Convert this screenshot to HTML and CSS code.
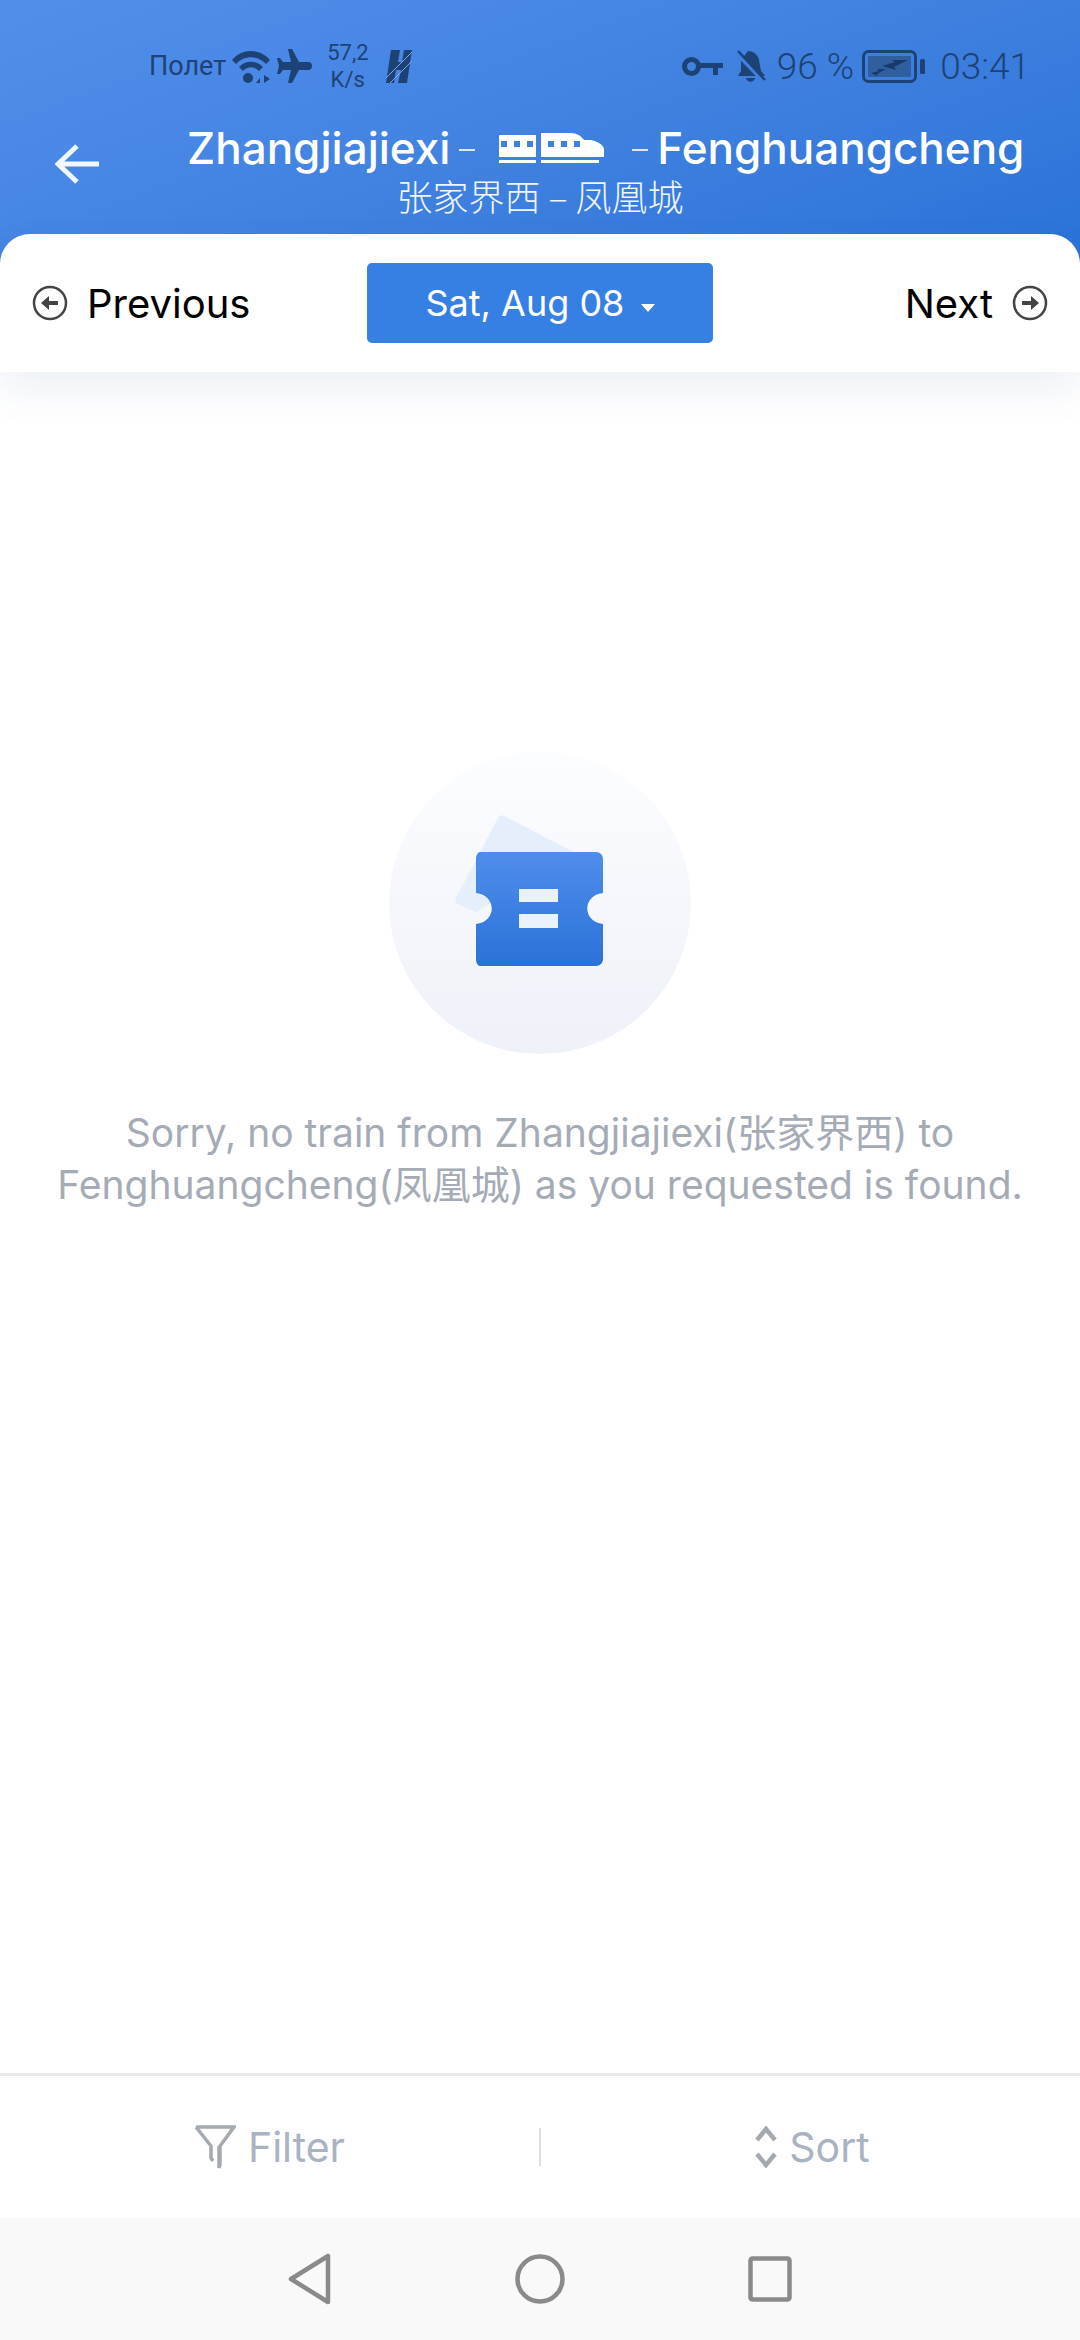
FILE: index.html
```html
<!DOCTYPE html>
<html lang="en">
<head>
  <meta charset="UTF-8">
  <meta name="viewport" content="width=device-width, initial-scale=1.0">
  <title>Train search</title>
  <link rel="stylesheet" href="styles.css">
</head>
<body>

<div class="page">
  <header class="top">
    <div class="status">
      <div class="status-left">
        <span class="carrier">Полет</span>
        <svg class="wifi" viewBox="0 0 40 35"><path d="M1 11 C11 -1 29 -1 39 11 L35 15 C27 6 13 6 5 15Z M8 18 C14 11 26 11 32 18 L28 22 C23 17 17 17 12 22Z" fill="#1d4275"/><circle cx="17" cy="29" r="5" fill="#1d4275"/><path d="M29 34V29L25 34H31 M33 26L39 30 33 34Z" fill="#1d4275"/></svg>
        <svg class="plane" viewBox="0 0 35 34"><path d="M11 0 L15 0 L22 13 L31 13 C34 13 35 15 35 17 C35 19 34 21 31 21 L22 21 L15 34 L11 34 L14 21 L6 21 L3 25 L0 25 L2 17 L0 9 L3 9 L6 13 L14 13Z" fill="#1d4275"/></svg>
        <div class="speed">57,2<br>K/s</div>
        <svg class="hd" viewBox="0 0 26 33"><path d="M5 0H14L12 12H16L18 0H26L21 33H12L15 20H10L8 33H0Z" fill="#1d4275"/><path d="M0 28L26 2M4 33L26 11" stroke="#7ea6e0" stroke-width="1"/></svg>
      </div>
      <div class="status-right">
        <svg class="key" viewBox="0 0 41 19"><circle cx="9.500" cy="9.500" r="7" fill="none" stroke="#1d4275" stroke-width="5"/><path d="M16 6H41V11H36V18H31V11H16Z" fill="#1d4275"/></svg>
        <svg class="bell" viewBox="0 0 31 33"><path d="M13 1 C19 1 23 5 24 10 L26 21 L30 26H3 L6 21 L6 10Z" fill="#1d4275"/><path d="M11 28H20C19 33 12 33 11 28Z" fill="#1d4275"/><path d="M1 2L29 31" stroke="#4080e0" stroke-width="5"/><path d="M3 1L30 30" stroke="#1d4275" stroke-width="2.500"/></svg>
        <span class="batt-pct">96 %</span>
        <svg class="battery" viewBox="0 0 64 33"><rect x="1.500" y="1.500" width="52" height="30" rx="5" fill="none" stroke="#1d4275" stroke-width="3"/><rect x="6" y="6" width="43" height="21" rx="1" fill="#2f5f9f"/><path d="M20 16L33 12L30 10L46 10L32 17L34 20Z M9 23L17 21L15 19L24 19L15 24L15 26Z" fill="#173a6a"/><rect x="58" y="9" width="5" height="15" rx="1.500" fill="#1d4275"/></svg>
        <span class="clock">03:41</span>
      </div>
    </div>
    <div class="route">
      <svg class="back" viewBox="0 0 44 42"><path d="M22 3L3 21L22 39M3 21H44" fill="none" stroke="#f2f7ff" stroke-width="5"/></svg>
      <span class="city">Zhangjiajiexi</span>
      <span class="dash dash-from"></span>
      <svg class="train" viewBox="0 0 105 30"><path d="M0 2H37V24H0Z M42 0H72C78 0 82 3 85 7H92C100 9 105 12 105 17V24H42Z" fill="#fff"/><path d="M0 27H37V30H0Z M42 27H100V30H42Z" fill="#fff"/><path d="M2 8H8V14H2Z M15 8H21V14H15Z M28 8H34V14H28Z M49 8H55V14H49Z M62 8H68V14H62Z M75 8H81V14H75Z" fill="#3f80df"/></svg>
      <span class="dash dash-to"></span>
      <span class="city">Fenghuangcheng</span>
    </div>
    <div class="route-cn">张家界西 – 凤凰城</div>
  </header>

  <div class="date-bar">
    <div class="day-link">
      <svg class="day-icon" viewBox="0 0 36 36"><circle cx="18" cy="18" r="16" fill="none" stroke="#444" stroke-width="2.500"/><path d="M9 18L17 11V16H26V20H17V25Z" fill="#444"/></svg>
      <span>Previous</span>
    </div>
    <button class="date-btn">Sat, Aug 08 <i class="caret"></i></button>
    <div class="day-link day-link-next">
      <span>Next</span>
      <svg class="day-icon" viewBox="0 0 36 36"><circle cx="18" cy="18" r="16" fill="none" stroke="#444" stroke-width="2.500"/><path d="M27 18L19 11V16H10V20H19V25Z" fill="#444"/></svg>
    </div>
  </div>

  <main class="empty">
    <div class="empty-circle">
      <svg class="ticket" viewBox="0 0 210 190">
        <defs>
          <linearGradient id="ticketFill" x1="0" y1="0" x2="0" y2="1">
            <stop offset="0" stop-color="#4f8deb"/>
            <stop offset="1" stop-color="#2b72d8"/>
          </linearGradient>
        </defs>
        <path d="M68 6 C70 3 73 3 76 5 L146 41 L46 100 L27 92 C25 90 25 88 26 86Z" fill="#e5eefb"/>
        <path d="M50 40 H166 C170 40 173 43 173 47 V81 C152 83 152 110 173 112 V147 C173 151 170 154 166 154 H50 C48 154 46 151 46 147 V112 C67 110 67 83 46 81 V47 C46 43 48 40 50 40Z" fill="url(#ticketFill)"/>
        <rect x="89" y="77" width="39" height="13" fill="#e9f1fc"/>
        <rect x="89" y="102" width="39" height="14" fill="#e9f1fc"/>
      </svg>
    </div>
    <p class="empty-msg">Sorry, no train from Zhangjiajiexi(张家界西) to<br>Fenghuangcheng(凤凰城) as you requested is found.</p>
  </main>

  <div class="tools">
    <div class="tool">
      <svg class="filter-icon" viewBox="0 0 42 44"><path d="M2 2H40L26 21V40L25 43V21M2 2L17 21V33L19 36" fill="none" stroke="#a4a9b0" stroke-width="3.500"/></svg>
      <span>Filter</span>
    </div>
    <div class="tool-sep"></div>
    <div class="tool">
      <svg class="sort-icon" viewBox="0 0 22 42"><path d="M2 14L11 3L20 14M2 28L11 39L20 28" fill="none" stroke="#a4a9b0" stroke-width="4.500"/></svg>
      <span>Sort</span>
    </div>
  </div>

  <nav class="sysnav">
    <svg class="nav-back" viewBox="0 0 44 52"><path d="M40 3V49L3 26Z" fill="none" stroke="#8a8a8a" stroke-width="4.500" stroke-linejoin="round"/></svg>
    <svg class="nav-home" viewBox="0 0 50 50"><circle cx="25" cy="25" r="22.500" fill="none" stroke="#8a8a8a" stroke-width="4.500"/></svg>
    <svg class="nav-recent" viewBox="0 0 44 46"><rect x="2.500" y="2.500" width="39" height="41" rx="2" fill="none" stroke="#8a8a8a" stroke-width="4.500"/></svg>
  </nav>
</div>

</body>
</html>
```

FILE: styles.css
```css
body {
  margin: 0;
  font-family: Inter, "Noto Sans CJK SC", sans-serif;
  background-color: #fff;
}
.page {
  display: flex;
  flex-direction: column;
  height: 100vh;
  overflow: hidden;
}
.top {
  height: 264px;
  box-sizing: border-box;
  margin-bottom: -30px;
  padding-top: 44px;
  background: linear-gradient(160deg, #528fec 0%, #3f80df 55%, #2a72d8 100%);
  color: #fff;
}
.status {
  display: flex;
  justify-content: space-between;
  height: 44px;
  padding: 0 50px 0 149px;
  color: #1d4275;
  font-family: Roboto, sans-serif;
}
.status-left, .status-right {
  display: flex;
  align-items: center;
}
.carrier {
  font-size: 27px;
  margin-right: 5px;
}
.wifi {
  width: 40px;
  height: 35px;
}
.plane {
  width: 35px;
  height: 34px;
  margin-left: 6px;
}
.speed {
  width: 41px;
  margin-left: 15px;
  font-size: 22px;
  line-height: 27px;
  text-align: center;
}
.hd {
  width: 26px;
  height: 33px;
  margin-left: 18px;
}
.key {
  width: 41px;
  height: 19px;
}
.bell {
  width: 31px;
  height: 33px;
  margin-left: 12px;
}
.batt-pct {
  font-size: 37px;
  font-weight: 300;
  margin-left: 11px;
}
.battery {
  width: 64px;
  height: 33px;
  margin-left: 8px;
}
.clock {
  font-size: 37px;
  font-weight: 300;
  margin-left: 14px;
}
.route {
  display: flex;
  align-items: center;
  height: 50px;
  margin-top: 35px;
  padding-left: 55px;
}
.back {
  width: 44px;
  height: 42px;
  margin: 32px 88px 0 0;
}
.city {
  font-size: 44px;
  font-weight: 500;
  line-height: 50px;
}
.dash {
  width: 16px;
  height: 2px;
  background-color: #dce8fa;
  margin-top: 4px;
}
.dash-from {
  margin-left: 9px;
}
.train {
  width: 105px;
  height: 30px;
  margin: 0 28px 0 24px;
}
.dash-to {
  margin-right: 9px;
}
.route-cn {
  margin-top: 2px;
  font-family: "Noto Sans CJK SC", sans-serif;
  font-size: 36px;
  font-weight: 300;
  line-height: 40px;
  text-align: center;
  color: #f0f5fe;
}
.date-bar {
  position: relative;
  display: flex;
  align-items: center;
  height: 138px;
  box-sizing: border-box;
  padding: 0 32px;
  background-color: #fff;
  border-radius: 30px 30px 0 0;
  box-shadow: 0 18px 40px rgba(60, 90, 140, 0.09);
  font-size: 40px;
  color: #000;
}
.day-link {
  flex: 1;
  display: flex;
  align-items: center;
  gap: 19px;
}
.day-link-next {
  justify-content: flex-end;
}
.day-icon {
  width: 36px;
  height: 36px;
}
.date-btn {
  width: 346px;
  height: 80px;
  border: none;
  border-radius: 5px;
  background-color: #3680e4;
  color: #fff;
  font-family: inherit;
  font-size: 36px;
}
.caret {
  display: inline-block;
  width: 0;
  height: 0;
  margin: 0 0 4px 6px;
  border-left: 7px solid transparent;
  border-right: 7px solid transparent;
  border-top: 8px solid #fff;
}
.empty {
  flex: 1;
  display: flex;
  flex-direction: column;
  align-items: center;
  padding-top: 380px;
}
.empty-circle {
  display: flex;
  align-items: center;
  justify-content: center;
  width: 302px;
  height: 302px;
  border-radius: 50%;
  background: linear-gradient(180deg, #fcfdff 0%, #eef1f8 100%);
}
.ticket {
  width: 210px;
  height: 190px;
  margin: 8px 0 0 -10px;
}
.empty-msg {
  margin: 53px 0 0;
  font-size: 39px;
  line-height: 52px;
  text-align: center;
  color: #a5abb5;
}
.tools {
  display: flex;
  align-items: center;
  height: 145px;
  box-sizing: border-box;
  border-top: 3px solid #e8e8e8;
  font-size: 41px;
  color: #a9b3c1;
}
.tool {
  flex: 1;
  display: flex;
  align-items: center;
  justify-content: center;
  gap: 12px;
}
.filter-icon {
  width: 42px;
  height: 44px;
}
.sort-icon {
  width: 22px;
  height: 42px;
  margin-left: 4px;
}
.tool-sep {
  width: 2px;
  height: 38px;
  background-color: #ddd;
}
.sysnav {
  display: flex;
  align-items: center;
  justify-content: space-between;
  height: 122px;
  box-sizing: border-box;
  padding: 0 288px;
  background-color: #f9f9f9;
}
.nav-back {
  width: 44px;
  height: 52px;
}
.nav-home {
  width: 50px;
  height: 50px;
}
.nav-recent {
  width: 44px;
  height: 46px;
}
```
